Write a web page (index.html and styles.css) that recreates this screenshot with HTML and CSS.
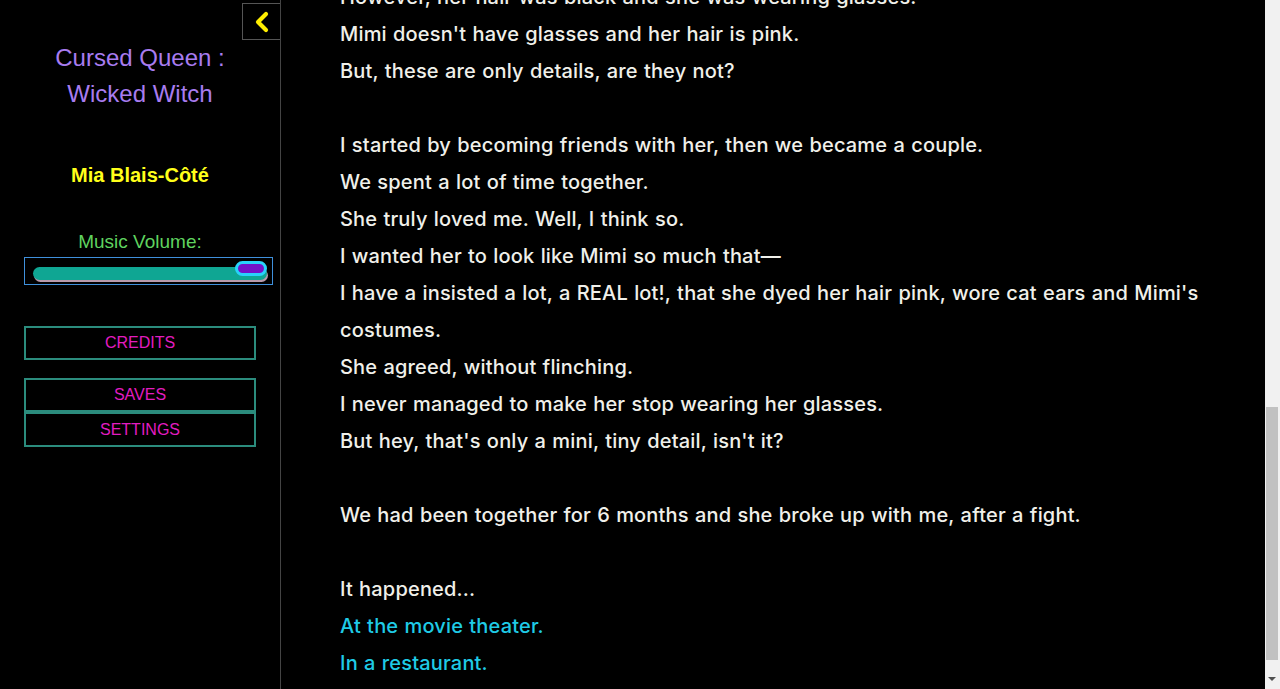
FILE: index.html
```html
<!DOCTYPE html>
<html lang="en">
<head>
<meta charset="utf-8">
<title>Cursed Queen : Wicked Witch</title>
<link rel="stylesheet" href="styles.css">
</head>
<body>
<div class="app">
  <aside class="sidebar">
    <div class="sidebar-top">
      <button class="toggle" aria-label="Hide sidebar">
        <svg width="18" height="22" viewBox="0 0 18 22"><path d="M13 3 L5 11 L13 19" fill="none" stroke="#ffee00" stroke-width="4.2" stroke-linecap="round" stroke-linejoin="round"/></svg>
      </button>
    </div>
    <h1 class="story-title">Cursed Queen :<br>Wicked Witch</h1>
    <p class="author">Mia Blais-Côté</p>
    <label class="volume-label" for="vol">Music Volume:</label>
    <div class="volume-box">
      <input id="vol" class="volume" type="range" min="0" max="100" value="100">
    </div>
    <nav class="menu">
      <button class="menu-btn">CREDITS</button>
      <div class="menu-group">
        <button class="menu-btn">SAVES</button>
        <button class="menu-btn">SETTINGS</button>
      </div>
    </nav>
  </aside>
  <main class="story">
    <div class="passage">
      However, her hair was black and she was wearing glasses.<br>
      Mimi doesn't have glasses and her hair is pink.<br>
      But, these are only details, are they not?<br>
      <br>
      I started by becoming friends with her, then we became a couple.<br>
      We spent a lot of time together.<br>
      She truly loved me. Well, I think so.<br>
      I wanted her to look like Mimi so much that—<br>
      I have a insisted a lot, a REAL lot!, that she dyed her hair pink, wore cat ears and Mimi's costumes.<br>
      She agreed, without flinching.<br>
      I never managed to make her stop wearing her glasses.<br>
      But hey, that's only a mini, tiny detail, isn't it?<br>
      <br>
      We had been together for 6 months and she broke up with me, after a fight.<br>
      <br>
      It happened...<br>
      <a class="choice" href="#">At the movie theater.</a><br>
      <a class="choice" href="#">In a restaurant.</a>
    </div>
  </main>
  <div class="scrollbar" aria-hidden="true">
    <div class="scroll-track">
      <div class="scroll-thumb"></div>
    </div>
    <div class="scroll-arrow"></div>
  </div>
</div>
</body>
</html>
```
FILE: styles.css
```css
* { box-sizing: border-box; }
html, body {
  margin: 0;
  height: 100%;
  background: #000;
  overflow: hidden;
}
.app {
  display: flex;
  height: 689px;
}
.sidebar {
  width: 281px;
  flex: none;
  border-right: 1px solid #444;
  display: flex;
  flex-direction: column;
  align-items: center;
  font-family: "Liberation Sans", Arial, sans-serif;
}
.sidebar-top {
  align-self: stretch;
  display: flex;
  justify-content: flex-end;
  padding-top: 3px;
  height: 40px;
}
.toggle {
  width: 38px;
  height: 37px;
  margin: 0;
  padding: 0;
  background: #000;
  border: 1px solid #555;
  border-right: none;
  display: flex;
  align-items: center;
  justify-content: center;
}
.story-title {
  margin: 0;
  font-weight: normal;
  font-size: 24px;
  line-height: 36px;
  color: #a87cf0;
  text-align: center;
}
.author {
  margin: 51px 0 0;
  font-size: 20px;
  line-height: 24px;
  font-weight: bold;
  color: #ffff1a;
}
.volume-label {
  margin-top: 43px;
  font-size: 19px;
  line-height: 24px;
  color: #5fd35f;
}
.volume-box {
  margin-top: 3px;
  width: 249px;
  height: 28px;
  border: 1px solid #3f90dc;
  padding: 0 5px 0 8px;
  display: flex;
  align-items: center;
  align-self: flex-start;
  margin-left: 24px;
}
.volume {
  -webkit-appearance: none;
  appearance: none;
  width: 234px;
  height: 20px;
  margin: 0;
  background: transparent;
}
.volume::-webkit-slider-runnable-track {
  height: 13px;
  border-radius: 7px;
  background: #0fa693;
  box-shadow: 1px 2px 0 #b89aac;
  margin-top: 5px;
}
.volume::-webkit-slider-thumb {
  -webkit-appearance: none;
  width: 32px;
  height: 15px;
  border-radius: 8px;
  background: #7312c8;
  border: 3px solid #28d2fa;
  margin-top: -6px;
}
.menu {
  margin-top: 41px;
  align-self: flex-start;
  margin-left: 24px;
  display: flex;
  flex-direction: column;
  gap: 18px;
}
.menu-group {
  display: flex;
  flex-direction: column;
}
.menu-btn {
  width: 232px;
  height: 34px;
  margin: 0;
  background: #000;
  border: 2px solid #2b8c7d;
  color: #e21cc0;
  font-family: "Liberation Sans", Arial, sans-serif;
  font-size: 16px;
  padding: 0;
}
.menu-group .menu-btn + .menu-btn {
  height: 35px;
  padding-top: 1px;
}
.story {
  flex: 1;
  overflow: hidden;
  padding: 0 55px 0 59px;
}
.passage {
  margin-top: -21px;
  font-family: Inter, "Noto Sans", sans-serif;
  font-size: 20px;
  font-weight: 500;
  letter-spacing: 0.18px;
  word-spacing: 0.7px;
  line-height: 37px;
  color: #f0f0ea;
}
.choice {
  color: #1fcbe6;
  text-decoration: none;
}
.scrollbar {
  width: 15px;
  flex: none;
  background: #f1f1f1;
  display: flex;
  flex-direction: column;
}
.scroll-track {
  flex: 1;
  padding: 407px 2px 0 1px;
}
.scroll-thumb {
  height: 253px;
  background: #c1c1c1;
}
.scroll-arrow {
  height: 20px;
  display: flex;
  justify-content: center;
  align-items: center;
}
.scroll-arrow::before {
  content: "";
  border-left: 4px solid transparent;
  border-right: 4px solid transparent;
  border-top: 4px solid #505050;
  margin-left: -1px;
}
```
